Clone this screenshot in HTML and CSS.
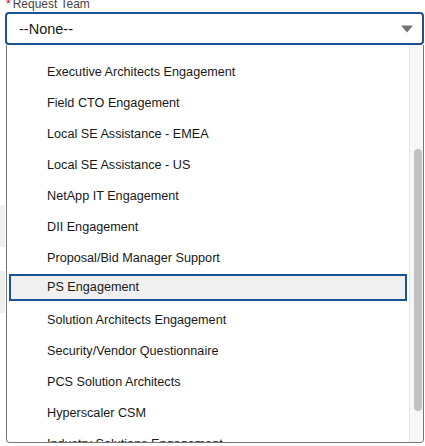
FILE: index.html
```html
<!DOCTYPE html>
<html lang="en">
	<head>
		<meta charset="UTF-8" />
		<meta name="viewport" content="width=device-width, initial-scale=1.0" />
		<title>Request Team</title>
		<link rel="stylesheet" href="styles.css">
	</head>
	<body>
		<div class="backdrop">
			<div class="backdrop-row first"></div>
			<div class="backdrop-row"></div>
		</div>
		<main class="field">
			<label class="field-label"><abbr class="required" title="required">*</abbr>Request Team</label>
			<div class="combobox">
				<span class="combobox-value">--None--</span>
				<svg class="combobox-arrow" viewBox="0 0 12 8" width="12" height="8" aria-hidden="true">
					<path d="M0 0.5 H12 L6 7.5 Z" fill="#747474" />
				</svg>
			</div>
			<div class="listbox" role="listbox">
				<ul class="options">
					<li class="option">Executive Architects Engagement</li>
					<li class="option">Field CTO Engagement</li>
					<li class="option">Local SE Assistance - EMEA</li>
					<li class="option">Local SE Assistance - US</li>
					<li class="option">NetApp IT Engagement</li>
					<li class="option">DII Engagement</li>
					<li class="option">Proposal/Bid Manager Support</li>
					<li class="option focused">PS Engagement</li>
					<li class="option">Solution Architects Engagement</li>
					<li class="option">Security/Vendor Questionnaire</li>
					<li class="option">PCS Solution Architects</li>
					<li class="option">Hyperscaler CSM</li>
					<li class="option">Industry Solutions Engagement</li>
				</ul>
				<div class="scrollbar">
					<div class="scrollbar-thumb"></div>
				</div>
			</div>
		</main>
	</body>
</html>
```

FILE: styles.css
```css
body {
	display: flex;
	margin: 0;
	height: 446px;
	overflow: hidden;
	background: #fff;
	font-family: 'Liberation Sans', Arial, sans-serif;
	color: #181818;
}
.backdrop {
	width: 5px;
	flex: none;
}
.backdrop-row {
	height: 42px;
	margin-top: 24px;
	background: #f0f0f0;
}
.backdrop-row.first {
	margin-top: 205px;
}
.field {
	display: flex;
	flex-direction: column;
	width: 419px;
}
.field-label {
	display: block;
	height: 15px;
	margin-top: -3px;
	padding-left: 1px;
	font-size: 12px;
	line-height: 14px;
	color: #444;
}
.required {
	color: #ba0517;
	text-decoration: none;
	margin-right: 2px;
}
.combobox {
	display: flex;
	align-items: center;
	justify-content: space-between;
	height: 29px;
	padding: 0 9px 0 12px;
	border: 2px solid #1b5297;
	border-radius: 4px;
	background: #fff;
}
.combobox-value {
	font-size: 14.5px;
}
.combobox-arrow {
	display: block;
}
.listbox {
	display: flex;
	height: 397px;
	margin-left: 1px;
	border: 1.5px solid #767676;
	border-top: none;
	border-radius: 0 0 4px 4px;
	overflow: hidden;
}
.options {
	flex: 1;
	list-style: none;
	margin: 0;
	padding: 10px 0 0 2px;
	overflow: hidden;
}
.option {
	height: 31px;
	padding-left: 36px;
	font-size: 12.65px;
	line-height: 31px;
	white-space: nowrap;
	border: 2px solid transparent;
	box-sizing: border-box;
	margin-right: 2px;
}
.option.focused {
	height: 27px;
	margin: 2px 2px 2px 0;
	line-height: 23px;
	border-color: #1b5297;
	background: #f0f0f0;
}
.scrollbar {
	width: 14px;
	flex: none;
	padding: 104px 0 0 4px;
	box-sizing: border-box;
	background: #f7f7f7;
	border-left: 1px solid #e6e6e6;
}
.scrollbar-thumb {
	width: 8px;
	height: 262px;
	border-radius: 4px;
	background: #c1c1c1;
}
```
